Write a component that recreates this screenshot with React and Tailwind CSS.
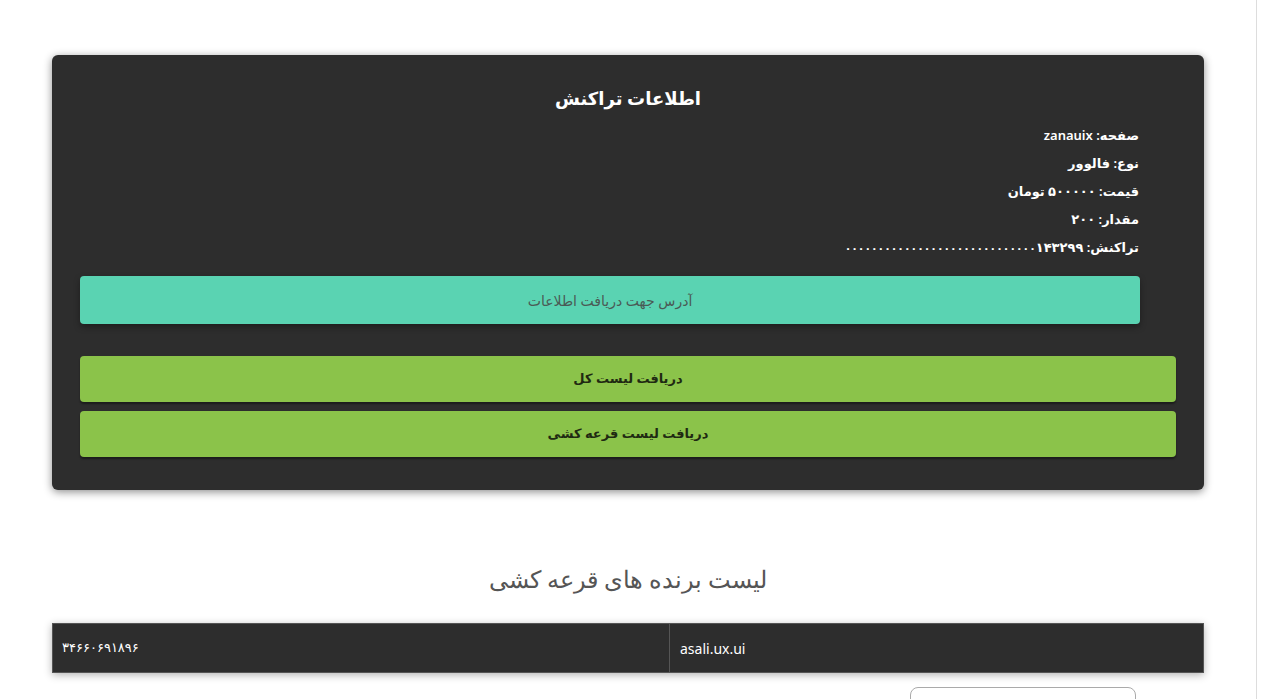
import React from "react";

const fa = { fontFamily: '"Noto Sans", "DejaVu Sans", sans-serif' };

const infoRows = [
  ["صفحه:", "zanauix"],
  ["نوع:", "فالوور"],
  ["قیمت:", "۵۰۰۰۰۰ تومان"],
  ["مقدار:", "۲۰۰"],
];

export default function App() {
  return (
    <div className="flex w-[1261px] h-[699px] overflow-hidden bg-white" style={fa}>
      <div className="w-[1256px] px-[52px] pt-[55px]">
        {/* Transaction card */}
        <div dir="rtl" className="bg-[#2d2d2d] rounded-md shadow-[0_2px_8px_rgba(0,0,0,0.45)] px-[28px] pt-[26px] pb-[33px]">
          <h2 className="text-center text-white text-[18px] font-bold leading-[34px]">اطلاعات تراکنش</h2>
          <div className="mr-[37px] mt-[6px] flex flex-col">
            {infoRows.map(([k, v]) => (
              <p key={k} className="text-white text-[13px] font-semibold leading-[28px]">
                {k} {v}
              </p>
            ))}
            <p className="h-[28px] text-white text-[13px] font-semibold leading-[28px]">
              تراکنش: <span className="text-[10.8px] leading-none">۰۰۰۰۰۰۰۰۰۰۰۰۰۰۰۰۰۰۰۰۰۰۰۰۰۰۰۰۰</span>۱۴۳۲۹۹
            </p>
          </div>
          <div className="mr-[36px] mt-[15px] h-[48px] bg-[#5ad3b2] rounded-sm shadow-[0_3px_6px_rgba(0,0,0,0.35)] flex items-center justify-center">
            <span className="text-[#4a5a55] text-[14px]">آدرس جهت دریافت اطلاعات</span>
          </div>
          <div className="mt-[32px] flex flex-col gap-[9px]">
            <button className="h-[46px] bg-[#8bc34a] rounded-sm text-[#1f2a12] text-[13px] font-bold shadow-[0_2px_2px_rgba(0,0,0,0.4)]">
              دریافت لیست کل
            </button>
            <button className="h-[46px] bg-[#8bc34a] rounded-sm text-[#1f2a12] text-[13px] font-bold shadow-[0_2px_2px_rgba(0,0,0,0.4)]">
              دریافت لیست قرعه کشی
            </button>
          </div>
        </div>

        {/* Winners */}
        <h3 dir="rtl" className="mt-[72px] text-center text-[#555] text-[24px] font-light leading-[34px]">
          لیست برنده های قرعه کشی
        </h3>
        <div className="mt-[27px] grid grid-cols-[617px_1fr] h-[50px] bg-[#2d2d2d] border border-[#555] shadow-[0_2px_8px_rgba(0,0,0,0.3)]">
          <div className="flex items-center pl-[9px] text-white text-[13px] border-r border-[#555]">۳۴۶۶۰۶۹۱۸۹۶</div>
          <div className="flex items-center pl-[10px] text-white text-[14px]">asali.ux.ui</div>
        </div>
        <div className="flex justify-end pr-[68px] mt-[14px]">
          <div className="w-[226px] h-[40px] rounded-lg border border-[#aaa] bg-white" />
        </div>
      </div>
      <div className="w-[5px] h-full border-l border-[#ddd] bg-white" />
    </div>
  );
}
